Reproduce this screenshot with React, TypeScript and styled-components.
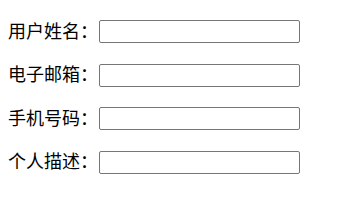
import React from "react";
import styled, { createGlobalStyle } from "styled-components";

const GlobalStyle = createGlobalStyle`
  body {
    margin: 0;
    background: #ffffff;
    font-family: "Noto Sans CJK SC", "Liberation Sans", sans-serif;
  }
`;

const Form = styled.form`
  display: flex;
  flex-direction: column;
  gap: 20.5px;
  padding: 20px 0 0 8px;
`;

const Row = styled.div`
  display: flex;
  align-items: center;
  height: 23px;
`;

const Label = styled.label`
  width: 91px;
  font-size: 18px;
  line-height: 23px;
  color: #000000;
  white-space: nowrap;
  margin-top: -3px;
`;

const Input = styled.input`
  box-sizing: border-box;
  width: 201px;
  height: 23px;
  margin: 0;
  padding: 1px 2px;
  border: 1px solid #767676;
  border-radius: 2px;
  background: #ffffff;
  font-size: 13px;
  outline: none;
`;

const fields = [
  { id: "username", label: "用户姓名：" },
  { id: "email", label: "电子邮箱：" },
  { id: "phone", label: "手机号码：" },
  { id: "desc", label: "个人描述：" },
];

const App = () => {
  return (
    <>
      <GlobalStyle />
      <Form onSubmit={(e) => e.preventDefault()}>
        {fields.map((f) => (
          <Row key={f.id}>
            <Label htmlFor={f.id}>{f.label}</Label>
            <Input id={f.id} type="text" />
          </Row>
        ))}
      </Form>
    </>
  );
};

export default App;
